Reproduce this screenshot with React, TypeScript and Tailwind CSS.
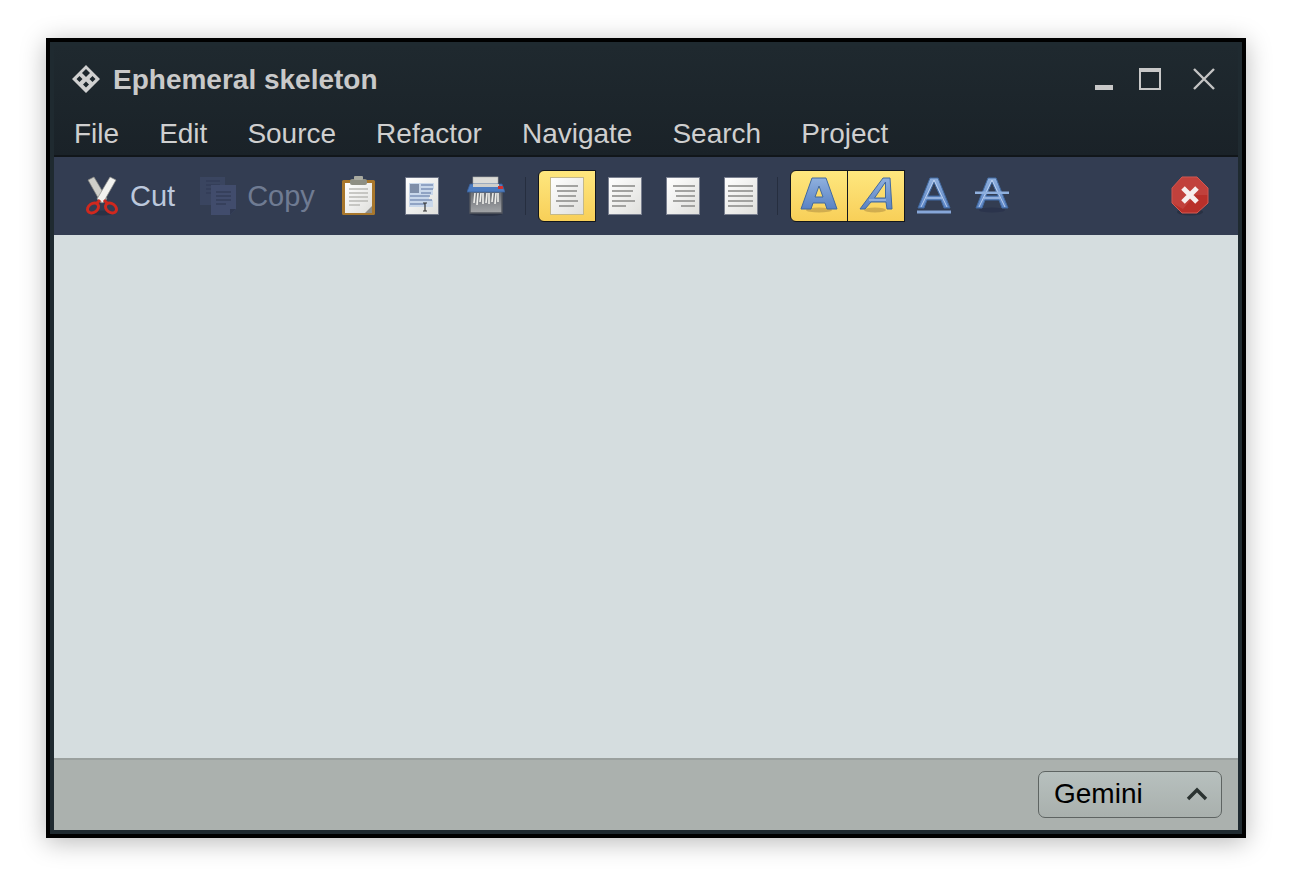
import React from "react";

const menus = ["File", "Edit", "Source", "Refactor", "Navigate", "Search", "Project"];

const Defs = () => (
  <svg width="0" height="0" className="absolute">
    <defs>
      <linearGradient id="sheet" x1="0" y1="0" x2="1" y2="1">
        <stop offset="0" stopColor="#ffffff" />
        <stop offset="1" stopColor="#dfdfdc" />
      </linearGradient>
      <linearGradient id="blueA" x1="0" y1="0" x2="0" y2="1">
        <stop offset="0" stopColor="#8fb0de" />
        <stop offset="1" stopColor="#5a83c4" />
      </linearGradient>
      <linearGradient id="shred" x1="0" y1="0" x2="0" y2="1">
        <stop offset="0" stopColor="#65696f" />
        <stop offset="1" stopColor="#a3a5a8" />
      </linearGradient>
    </defs>
  </svg>
);

const Logo = () => (
  <svg width="30" height="30" viewBox="0 0 30 30" className="mr-[12px]">
    <path
      fillRule="evenodd"
      fill="#d0d0d0"
      d="M15 1L29 15 15 29 1 15ZM15 5L11 9 15 13 19 9ZM8.5 12L5.5 15 8.5 18 11.5 15ZM21.5 12L18.5 15 21.5 18 24.5 15ZM15 17.5L12 20.5 15 23.5 18 20.5Z"
    />
  </svg>
);

const Scissors = () => (
  <svg width="34" height="40" viewBox="0 0 34 40">
    <ellipse cx="17" cy="37" rx="12" ry="2.5" fill="#232a3a" opacity="0.55" />
    <path d="M3 4L9 1 22 23 16 27Z" fill="#cfcfca" stroke="#85857f" strokeWidth="0.7" />
    <path d="M31 4L25 1 12 23 18 27Z" fill="#f2f2ef" stroke="#8d8d88" strokeWidth="0.7" />
    <path d="M15 24L11 28M19 24L23 28" stroke="#cc2a20" strokeWidth="3" />
    <ellipse cx="8" cy="32" rx="6" ry="4.4" fill="none" stroke="#d0281e" strokeWidth="3" transform="rotate(-35 8 32)" />
    <ellipse cx="26" cy="32" rx="6" ry="4.4" fill="none" stroke="#d0281e" strokeWidth="3" transform="rotate(35 26 32)" />
  </svg>
);

const CopyIcon = () => (
  <svg width="38" height="40" viewBox="0 0 38 40">
    <rect x="1" y="1" width="25" height="28" fill="#3a4560" />
    <path d="M7 5h14M7 9h14M7 13h14M7 17h14" stroke="#333d57" strokeWidth="1.5" />
    <path d="M12 9h25v24l-6 6H12Z" fill="#414c6c" />
    <path d="M17 16h15M17 20h15M17 24h15M17 28h10" stroke="#333d57" strokeWidth="1.5" />
    <path d="M31 39l6-6h-6Z" fill="#2f3850" />
  </svg>
);

const Clipboard = () => (
  <svg width="36" height="40" viewBox="0 0 36 40">
    <rect x="1" y="4" width="33" height="35" rx="1.5" fill="#a8772c" />
    <path d="M4 7h27v24l-6 6H4Z" fill="url(#sheet)" />
    <path d="M8 13h19M8 17h19M8 21h19M8 25h19M8 29h11" stroke="#b9b9b5" strokeWidth="1.5" />
    <path d="M24 37l7-7v7Z" fill="#8f8f8b" />
    <rect x="9" y="3" width="17" height="6" rx="2" fill="#8e8f84" />
    <rect x="13" y="0" width="9" height="4" rx="1" fill="#a9aaa0" />
  </svg>
);

const PageSelect = () => (
  <svg width="34" height="38" viewBox="0 0 34 38">
    <rect x="0.5" y="0.5" width="33" height="37" fill="url(#sheet)" stroke="#6d7486" />
    <path d="M4 6H29V12H28V18H24V23H28V30H4Z" fill="#c9d7ea" />
    <rect x="5" y="7" width="9" height="9" fill="#7f8ea8" />
    <path d="M16 8h12M16 12h12M16 16h10M5 19h20M5 23h22M5 27h15" stroke="#7d93b8" strokeWidth="1.4" />
    <path d="M20 26v8M18 26h4M18 34h4" stroke="#333" strokeWidth="1.2" />
  </svg>
);

const Shredder = () => (
  <svg width="38" height="40" viewBox="0 0 38 40">
    <ellipse cx="19" cy="38" rx="16" ry="2" fill="#232a3a" opacity="0.6" />
    <path d="M3 14H35V37H3Z" fill="url(#shred)" stroke="#53575f" strokeWidth="1.4" />
    <rect x="6" y="1" width="25" height="10" fill="#dcdcd8" stroke="#b0b0ac" strokeWidth="0.6" />
    <path d="M3 8H35L38 16H0Z" fill="#4c7cc0" stroke="#3a5f98" strokeWidth="0.8" />
    <rect x="6" y="8" width="26" height="3" fill="#cfcfcb" />
    <rect x="31" y="10" width="5" height="3" fill="#d03030" />
    <path d="M7 27l1-10M10 29l1-12M13 26l1-9M16 28l0-11M19 27l1-10M22 28l0-11M25 26l1-9M28 28l1-11M31 26l0-9" stroke="#eeeeea" strokeWidth="1.6" />
  </svg>
);

const DocAlign = ({ lines, on }: { lines: [number, number][]; on?: boolean }) => (
  <svg width="34" height="38" viewBox="0 0 34 38">
    <rect x="0.5" y="0.5" width="33" height="37" fill="url(#sheet)" stroke={on ? "#c4b98a" : "#7a8090"} />
    {lines.map(([a, b], i) => (
      <rect key={i} x={a} y={8 + i * 5} width={b - a} height="2" fill="#a2a2a0" />
    ))}
  </svg>
);

const BoldA = () => (
  <svg width="38" height="38" viewBox="0 0 38 38">
    <ellipse cx="19" cy="33" rx="13" ry="2.5" fill="#bf9d48" opacity="0.7" />
    <path fillRule="evenodd" d="M12 1H26L37 32H27L25 26H13L11 32H1ZM19 9L15 20H23Z" fill="url(#blueA)" stroke="#41699f" strokeWidth="1" />
  </svg>
);

const ItalicA = () => (
  <svg width="36" height="38" viewBox="0 0 36 38">
    <ellipse cx="17" cy="33" rx="11" ry="2.5" fill="#bf9d48" opacity="0.7" />
    <path fillRule="evenodd" d="M25 1H32L34 32H29L28 25H13L7 32H2ZM27.5 5L16.5 21H27.5Z" fill="url(#blueA)" stroke="#41699f" strokeWidth="1" />
    <path d="M11 23H28" stroke="#c2d5f0" strokeWidth="0.9" fill="none" />
  </svg>
);

const ThinA = ({ under, strike }: { under?: boolean; strike?: boolean }) => (
  <svg width="36" height="38" viewBox="0 0 36 38">
    {strike && <ellipse cx="18" cy="33" rx="13" ry="2.5" fill="#28304a" opacity="0.7" />}
    <path fillRule="evenodd" d="M14 1H22L34 31H28L25 23H11L8 31H2ZM18 5L12 19H24Z" fill="url(#blueA)" stroke="#41699f" strokeWidth="1" />
    <path d="M18 3L5 30M18 3L31 30M10 21H26" stroke="#c2d5f0" strokeWidth="0.9" fill="none" />
    {under && <rect x="1" y="33.5" width="34" height="3" fill="#86a6d8" />}
    {strike && <rect x="1" y="14.5" width="34" height="2.5" fill="#8fb0de" />}
  </svg>
);

const ErrorIcon = () => (
  <svg width="38" height="40" viewBox="0 0 38 40">
    <ellipse cx="19" cy="36" rx="13" ry="3.5" fill="#232a3a" opacity="0.6" />
    <path d="M11 1h15l11 11v15L26 37H11L1 27V12Z" fill="#b9302a" stroke="#d45a52" strokeWidth="1" />
    <path d="M1 12L11 1h15l11 11v7H24L12 33 1 27Z" fill="#c9504a" opacity="0.55" />
    <path d="M12 12l14 14M26 12L12 26" stroke="#f6eeee" strokeWidth="5" />
  </svg>
);

const Tb = ({ on, left, children }: { on?: boolean; left?: boolean; children: React.ReactNode }) => (
  <div
    className={
      on
        ? `w-[58px] h-[52px] flex items-center justify-center border border-[#12161d] bg-gradient-to-b from-[#fee77e] to-[#f8cf58] ${left ? "rounded-l-[6px]" : "-ml-px"}`
        : "w-[58px] h-[52px] flex items-center justify-center"
    }
  >
    {children}
  </div>
);

export default function App() {
  return (
    <div className="w-[1292px] h-[892px] bg-white pt-[38px] pl-[46px] font-['Liberation_Sans',Arial,sans-serif] overflow-hidden">
      <Defs />
      <div className="w-[1200px] h-[800px] border-[4px] border-black bg-[#1f2a30] p-[4px] shadow-[0_4px_24px_rgba(0,0,0,0.28)]">
        <div className="h-full flex flex-col">
          <div className="h-[111px] shrink-0 bg-gradient-to-b from-[#1f292f] to-[#1a2228] border-b-[2px] border-[#11161a] flex flex-col">
            <div className="h-[66px] flex items-center pl-[17px] pr-[22px] text-[#c9c9c9]">
              <Logo />
              <span className="text-[28px] font-bold mt-[2px]">Ephemeral skeleton</span>
              <div className="ml-auto flex items-center">
                <div className="w-[18px] h-[5px] bg-[#c8c8c8] mt-[17px] mr-[26px]" />
                <div className="w-[22px] h-[22px] border-[2px] border-t-[4px] border-[#c8c8c8] mr-[31px]" />
                <svg width="24" height="24" viewBox="0 0 24 24">
                  <path d="M2 2l20 20M22 2L2 22" stroke="#c4c4c4" strokeWidth="2.4" />
                </svg>
              </div>
            </div>
            <div className="flex-1 flex items-center gap-[40px] pl-[20px] text-[28px] text-[#cfcfcf] leading-none">
              {menus.map((m) => (
                <span key={m}>{m}</span>
              ))}
            </div>
          </div>
          <div className="h-[78px] shrink-0 bg-[#333d52] flex items-center pl-[31px] pr-[29px]">
            <Scissors />
            <span className="text-[29px] text-[#bcc8dc] ml-[11px] mr-[24px] mt-[2px]">Cut</span>
            <CopyIcon />
            <span className="text-[29px] text-[#6f7b92] ml-[10px] mr-[26px] mt-[2px]">Copy</span>
            <Clipboard />
            <div className="w-[28px]" />
            <PageSelect />
            <div className="w-[28px]" />
            <Shredder />
            <div className="w-px h-[38px] bg-[#262e3f] ml-[20px] mr-[12px]" />
            <Tb on left>
              <DocAlign on lines={[[6, 28], [7, 27], [8, 26], [6, 28], [9, 24]]} />
            </Tb>
            <Tb>
              <DocAlign lines={[[4, 27], [4, 25], [4, 23], [4, 27], [4, 18]]} />
            </Tb>
            <Tb>
              <DocAlign lines={[[7, 29], [9, 29], [10, 29], [7, 29], [15, 29]]} />
            </Tb>
            <Tb>
              <DocAlign lines={[[4, 29], [4, 29], [4, 29], [4, 29], [4, 29]]} />
            </Tb>
            <div className="w-px h-[38px] bg-[#262e3f] ml-[7px] mr-[12px]" />
            <Tb on left>
              <BoldA />
            </Tb>
            <Tb on>
              <ItalicA />
            </Tb>
            <Tb>
              <ThinA under />
            </Tb>
            <Tb>
              <ThinA strike />
            </Tb>
            <div className="ml-auto">
              <ErrorIcon />
            </div>
          </div>
          <div className="flex-1 bg-[#d5dddf]" />
          <div className="h-[72px] shrink-0 bg-[#abb1ae] border-t-[2px] border-[#9aa09e] flex items-center justify-end pr-[16px]">
            <div className="w-[184px] h-[47px] mb-[2px] rounded-[7px] border border-[#5e6462] bg-gradient-to-b from-[#b7c0be] to-[#a9b0ad] flex items-center justify-between pl-[15px] pr-[13px] text-[28px] text-black">
              <span>Gemini</span>
              <svg width="22" height="14" viewBox="0 0 22 14">
                <path d="M2 12l9-9 9 9" fill="none" stroke="#2b3331" strokeWidth="3.4" />
              </svg>
            </div>
          </div>
        </div>
      </div>
    </div>
  );
}
